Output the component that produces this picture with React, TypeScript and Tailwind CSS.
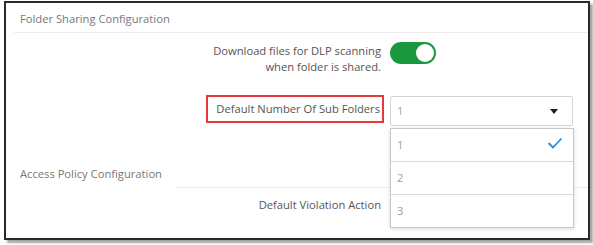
import React from "react";

const font = { fontFamily: '"Open Sans", "Noto Sans", sans-serif' };

export default function App() {
  return (
    <div className="w-[593px] h-[245px] bg-white pl-[4px] pt-[1px]" style={font}>
      <div className="relative w-[586px] h-[239px] border-2 border-[#2a2a2a] bg-white shadow-[3px_3px_2px_rgba(0,0,0,0.35)]">
        {/* header */}
        <div className="pl-[14px] pt-[8px] text-[11.2px] leading-[16px] text-[#777777]">Folder Sharing Configuration</div>
        <div className="ml-[8px] mt-[5px] h-px bg-[#ececec]" />

        {/* row 1 */}
        <div className="flex mt-[9px]">
          <div className="w-[375px] pt-[1px] text-right text-[11.2px] leading-[16px] text-[#555555]">
            Download files for DLP scanning
            <br />
            when folder is shared.
          </div>
          <div className="ml-[9px]">
            <div className="flex items-center justify-end w-[46px] h-[22px] rounded-full bg-[#19983f] pr-[2px]">
              <div className="w-[18px] h-[18px] rounded-full bg-white" />
            </div>
          </div>
        </div>

        {/* row 2 */}
        <div className="flex mt-[21px]">
          <div className="w-[378px] flex justify-end">
            <div className="w-[178px] h-[28px] -mt-[1px] border-2 border-[#e5383f] flex items-center justify-end pr-[2px] text-[11.2px] text-[#555555]">
              Default Number Of Sub Folders
            </div>
          </div>
          <div className="ml-[6px] w-[183px] h-[30px] border border-[#d4d4d4] rounded-[2px] flex items-center justify-between pl-[6px] pr-[14px] text-[11.2px] text-[#a8a8a8]">
            <span>1</span>
            <svg width="8" height="5" viewBox="0 0 8 5">
              <path d="M0 0 L8 0 L4 5 Z" fill="#222" />
            </svg>
          </div>
        </div>

        {/* access policy */}
        <div className="mt-[40px] pl-[14px] text-[11.2px] leading-[16px] text-[#777777]">Access Policy Configuration</div>
        <div className="ml-[169px] mt-[5px] h-px bg-[#ececec]" />
        <div className="flex mt-[9px]">
          <div className="w-[375px] text-right text-[11.2px] leading-[16px] text-[#555555]">Default Violation Action</div>
        </div>

        {/* dropdown */}
        <div className="absolute left-[384px] top-[125px] w-[184px] bg-white border border-[#c8c8c8] shadow-[0_1px_4px_rgba(0,0,0,0.15)] text-[11.2px] text-[#a0a0a0]">
          <div className="h-[33px] flex items-center justify-between pl-[6px] pr-[10px] border-b border-[#d8d8d8]">
            <span>1</span>
            <svg width="16" height="12" viewBox="0 0 16 12" className="-mt-[4px]">
              <path d="M1.5 6 L6 10.5 L14.5 1.5" fill="none" stroke="#2a8ad6" strokeWidth="1.8" />
            </svg>
          </div>
          <div className="h-[33px] flex items-center pl-[6px] border-b border-[#d8d8d8]">2</div>
          <div className="h-[32px] flex items-center pl-[6px]">3</div>
        </div>
      </div>
    </div>
  );
}
